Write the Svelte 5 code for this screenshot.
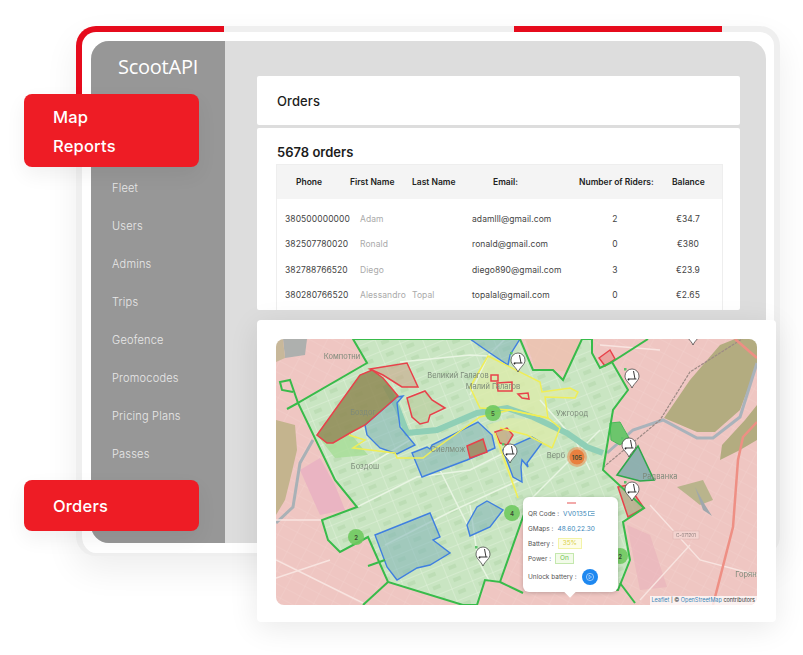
<script>
  const nav = ['Fleet', 'Users', 'Admins', 'Trips', 'Geofence', 'Promocodes', 'Pricing Plans', 'Passes'];
  const heads = ['Phone', 'First Name', 'Last Name', 'Email:', 'Number of Riders:', 'Balance'];
  const rows = [
    { phone: '380500000000', first: 'Adam', last: '', email: 'adamlll@gmail.com', riders: 2, bal: '€34.7' },
    { phone: '382507780020', first: 'Ronald', last: '', email: 'ronald@gmail.com', riders: 0, bal: '€380' },
    { phone: '382788766520', first: 'Diego', last: '', email: 'diego890@gmail.com', riders: 3, bal: '€23.9' },
    { phone: '380280766520', first: 'Alessandro', last: 'Topal', email: 'topalal@gmail.com', riders: 0, bal: '€2.65' },
  ];

  // map shapes, in page pixels (viewBox starts at the map's corner)
  const zone = '353,339 367,363 298,403 335,480 357,507 322,520 328,540 340,552 368,537 388,582 463,605 477,605 485,580 500,582 523,517 560,585 618,590 630,560 623,522 644,508 603,470 613,410 628,390 612,362 600,368 592,353 592,339 582,339 563,380 553,370 533,370 520,339';
  const yellowNorth = '488,356 540,382 542,392 570,388 578,392 575,398 545,397 548,418 510,410 480,408 470,387';
  const yellowSouth = '487,425 510,418 548,420 560,428 552,448 527,435 505,432 512,465 518,498 502,460 495,440';
  const blue = [
    '470,339 490,353 508,365 510,355 520,339',
    '365,425 397,397 403,396 397,403 400,427 415,445 397,454 380,448 367,435',
    '412,453 427,447 430,449 432,445 478,422 492,435 495,448 467,460 422,477',
    '467,525 477,507 487,501 503,510 490,527 470,536',
    '375,535 430,513 440,537 433,540 450,553 430,565 417,568 397,580 387,567',
    '503,450 532,437 542,443 527,463 528,467 522,460 521,467 522,482 513,477',
  ];
  const red = [
    { p: '317,435 360,375 372,370 383,378 398,396 365,425 350,433 333,443 327,443', f: '#8f8a55', o: 0.85 },
    { p: '370,369 407,363 418,387 402,387 383,375', f: '#c9a78a', o: 0.6 },
    { p: '407,398 425,391 432,400 445,408 430,415 428,422 420,424 412,417', f: '#b9c99a', o: 0.6 },
    { p: '467,446 483,439 487,452 470,458', f: '#a08a60', o: 0.85 },
    { p: '491,375 498,375 498,381 491,381', f: 'none', o: 0 },
    { p: '497,383 512,382 512,391 498,391', f: 'none', o: 0 },
    { p: '518,394 528,393 529,399 522,398', f: 'none', o: 0 },
    { p: '495,432 507,428 513,435 507,445 500,443', f: '#c0a080', o: 0.7 },
    { p: '599,358 610,350 615,359 605,366', f: '#e89a96', o: 0.8 },
    { p: '618,487 628,485 644,508 628,517', f: '#b8a888', o: 0.8 },
  ];
  const pins = [[518, 372], [510, 463], [483, 566], [632, 388], [629, 457], [632, 501], [693, 345]];
  const clusters = [
    { x: 493, y: 413, n: '5' },
    { x: 356, y: 537, n: '2' },
    { x: 512, y: 513, n: '4' },
    { x: 620, y: 556, n: '2' },
  ];
  const labels = [
    { x: 342, y: 359, t: 'Компотни' },
    { x: 458, y: 378, t: 'Великий Галагов' },
    { x: 493, y: 389, t: 'Малий Галагов' },
    { x: 363, y: 415, t: 'Боздог' },
    { x: 448, y: 452, t: 'Сиелмож' },
    { x: 365, y: 469, t: 'Боздош' },
    { x: 572, y: 416, t: 'Ужгород' },
    { x: 556, y: 458, t: 'Верб' },
    { x: 660, y: 479, t: 'Радванка' },
    { x: 746, y: 577, t: 'Горян' },
  ];
  // lighter main streets laid over the zone
  const streets = [
    '357,507 417,477 470,470 510,450',
    '385,545 450,512 520,480',
    '470,505 478,560 490,582',
    '400,362 470,355 488,356',
    '505,339 488,356 470,395',
    '540,400 575,440 590,470',
    '560,470 600,430',
    '530,500 560,470',
    '360,470 410,440',
    '440,470 470,530',
  ];
  const pinkRoads = [
    '276,560 363,603',
    '276,520 322,520',
    '276,578 330,560',
    '650,505 700,560 757,575',
    '640,600 690,545',
    '660,350 600,345',
  ];
</script>

<div class="stage">
  <div class="frame">
    <div class="screen">
      <aside class="side">
        <div class="logo">ScootAPI</div>
        <nav class="nav">
          {#each nav as item}
            <span>{item}</span>
          {/each}
        </nav>
      </aside>
      <main class="main">
        <div class="card title-card">Orders</div>
        <div class="card list-card">
          <h2>5678 orders</h2>
          <div class="table">
            <div class="thead">
              {#each heads as h}
                <span>{h}</span>
              {/each}
            </div>
            <div class="tbody">
              {#each rows as r}
                <div class="row">
                  <span>{r.phone}</span>
                  <span class="muted">{r.first}</span>
                  <span class="muted">{r.last}</span>
                  <span>{r.email}</span>
                  <span class="mid">{r.riders}</span>
                  <span class="mid">{r.bal}</span>
                </div>
              {/each}
            </div>
          </div>
        </div>
      </main>
    </div>
    <div class="accent-left"></div>
    <div class="accent-right"></div>
  </div>

  <div class="tag tag-top"><span>Map</span><span>Reports</span></div>
  <div class="tag tag-bottom"><span>Orders</span></div>

  <div class="map-card">
    <div class="map">
      <svg class="tiles" viewBox="276 339 481 266" width="481" height="266">
        <defs>
          <pattern id="pinkGrid" width="16" height="11" patternUnits="userSpaceOnUse" patternTransform="rotate(28)">
            <path d="M0 0H16M0 0V11" stroke="#f6dcd8" stroke-width="0.8" fill="none" opacity="0.55" />
          </pattern>
          <pattern id="greenGrid" width="22" height="13" patternUnits="userSpaceOnUse" patternTransform="rotate(-22)">
            <path d="M0 0H22M0 0V13" stroke="#e2f2dc" stroke-width="1" fill="none" />
            <rect x="5" y="4" width="8" height="4" fill="#a9d3a2" opacity="0.4" />
          </pattern>
        </defs>

        <rect x="276" y="339" width="481" height="266" fill="#efc6c2" />
        <rect x="276" y="339" width="481" height="266" fill="url(#pinkGrid)" />

        <!-- land use outside the zone -->
        <polygon points="283,339 307,339 305,355 285,358" fill="#aeb0ae" />
        <polygon points="276,339 283,339 285,358 276,362" fill="#c8b89a" />
        <polygon points="276,420 295,425 297,450 290,480 285,500 276,515" fill="#c4b48e" />
        <polygon points="300,470 320,458 335,485 345,510 320,515" fill="#eab4c2" />
        <polygon points="664,418 690,380 720,345 735,339 757,339 757,365 740,410 715,432 697,432" fill="#b3ac80" />
        <polygon points="720,460 722,445 745,420 757,405 757,440 740,450" fill="#b3ac80" />
        <polygon points="677,487 703,480 713,500 700,505 690,497" fill="#b9b48c" />
        <polygon points="695,487 705,505 712,516 703,510" fill="#9fa7ad" />
        <polygon points="525,339 580,339 570,372 535,368" fill="#e9c3ac" opacity="0.7" />
        <polygon points="627,525 650,535 667,587 640,590" fill="#e8aeba" opacity="0.5" />
        <polyline points="313,440 300,463 293,507 276,523" fill="none" stroke="#a9b1b6" stroke-width="3" />
        <polyline points="607,453 633,430 663,420 697,438 713,438 740,417 757,363" fill="none" stroke="#a9b3bb" stroke-width="3" />
        <polyline points="600,470 660,420 690,372 742,339" fill="none" stroke="#9d8a85" stroke-width="1.2" stroke-dasharray="3 1" />
        {#each pinkRoads as r}
          <polyline points={r} fill="none" stroke="#f8e4e0" stroke-width="1.4" />
        {/each}
        <polyline points="757,422 743,437 738,460 733,527 713,605" fill="none" stroke="#ee8f84" stroke-width="2.5" />
        <polyline points="735,339 757,358" fill="none" stroke="#ee8f84" stroke-width="2.5" />
        <rect x="673" y="531" width="26" height="8" fill="#f3d3cf" stroke="#d9b0ac" stroke-width="0.5" />
        <text x="686" y="537" class="road">C-071201</text>

        <!-- service zone -->
        <polygon points={zone} fill="#c9e5c2" />
        <polygon points={zone} fill="url(#greenGrid)" />
        <polygon points={yellowNorth} fill="#dcebaa" opacity="0.8" />
        <polygon points={yellowSouth} fill="#dcebaa" opacity="0.8" />
        <polygon points="317,435 327,443 333,443 350,433 368,455 335,458" fill="#a6dd96" opacity="0.8" />
        {#each streets as s}
          <polyline points={s} fill="none" stroke="#e8f5e2" stroke-width="1.5" />
        {/each}
        <polyline points="385,385 397,407 407,433 437,430 477,413 507,408 533,417 567,433 587,447 603,453" fill="none" stroke="#8fcfb6" stroke-width="6" />
        <polygon points="610,423 620,422 629,438 620,445 611,440" fill="#6cc56c" stroke="#4cb85a" />

        {#each blue as p}
          <polygon points={p} fill="#7fb2b8" fill-opacity="0.55" stroke="#3f7fe0" stroke-width="1.4" />
        {/each}
        {#each red as r}
          <polygon points={r.p} fill={r.f} fill-opacity={r.o} stroke="#e8414a" stroke-width="1.5" />
        {/each}

        <!-- yellow ribbons -->
        <g fill="none" stroke="#f0ee55" stroke-width="1.5">
          <polyline points="349,435 365,440 353,448 395,453 397,458 423,458 432,451 480,417 510,410 548,418 560,428 552,448" />
          <polygon points={yellowNorth} />
          <polyline points="500,428 527,435 552,448" />
          <polyline points="495,433 518,498" />
        </g>

        <!-- zone outline -->
        <g fill="none" stroke="#38bb4a" stroke-width="2">
          <polygon points={zone} />
          <polyline points="287,409 298,403 290,380 280,382 282,390 293,392" />
          <polyline points="363,605 388,582" />
          <polyline points="368,566 385,560" />
          <polyline points="500,582 523,593" />
          <polyline points="612,362 648,339" />
          <polyline points="620,583 635,603" />
        </g>
        <polygon points="638,446 654,480 640,481 617,475" fill="#6fa8a8" fill-opacity="0.75" stroke="#2fa84a" stroke-width="1.6" />

        {#each labels as l}
          <text x={l.x} y={l.y} class="place">{l.t}</text>
        {/each}
      </svg>

      <svg class="marks" viewBox="276 339 481 266" width="481" height="266">
        <defs>
          <symbol id="pin" viewBox="-8 -21 16 22" overflow="visible">
            <path d="M0 0C-2-5-7-7-7-12A7 7 0 1 1 7-12C7-7 2-5 0 0Z" fill="#fff" stroke="#333" stroke-width="0.7" />
            <path d="M1.5-17 3-9H-3.5M3-9 4.5-9" fill="none" stroke="#222" stroke-width="0.9" />
            <circle cx="-3.5" cy="-8.5" r="0.9" fill="#222" />
            <rect x="-8" y="-20" width="2.5" height="2.5" fill="#5cc26a" />
          </symbol>
        </defs>
        {#each clusters as c}
          <circle cx={c.x} cy={c.y} r="8" fill="#6fc95f" opacity="0.9" />
          <text x={c.x} y={c.y + 2.5} class="count">{c.n}</text>
        {/each}
        <circle cx="577" cy="457" r="10" fill="#ec8a4e" opacity="0.55" />
        <circle cx="577" cy="457" r="7.5" fill="#e9803f" />
        <text x="577" y="459.5" class="count">105</text>

        {#each pins as p}
          <use href="#pin" x={p[0] - 8} y={p[1] - 21} width="16" height="22" />
        {/each}
      </svg>

      <div class="popup">
        <i class="dash"></i>
        <div class="pop-row"><span>QR Code :</span><b class="link">VV0135</b><svg class="qr" viewBox="0 0 7 5" width="7" height="5"><path d="M0.4 0.4H6.6M0.4 4.6H6.6M0.4 0.4V4.6M3 2.5H6.6" fill="none" stroke="#3a86b8" stroke-width="0.7" /></svg></div>
        <div class="pop-row"><span>GMaps :</span><b class="link">48.60,22.30</b></div>
        <div class="pop-row"><span>Battery :</span><b class="chip chip-y">35%</b></div>
        <div class="pop-row"><span>Power :</span><b class="chip chip-g">On</b></div>
        <div class="pop-row last">
          <span>Unlock battery :</span>
          <span class="unlock">
            <svg viewBox="0 0 16 16" width="16" height="16">
              <circle cx="8" cy="8" r="3.6" fill="none" stroke="#cfe4ff" stroke-width="0.7" />
              <path d="M7 6.2 9.6 8 7 9.8Z" fill="none" stroke="#cfe4ff" stroke-width="0.6" />
            </svg>
          </span>
        </div>
      </div>

      <div class="attrib"><em>Leaflet</em> | © <em>OpenStreetMap</em> contributors</div>
    </div>
  </div>
</div>

<style>
  :global(body) {
    margin: 0;
    background: #fff;
    font-family: Inter, "Liberation Sans", sans-serif;
  }

  .stage {
    position: relative;
    width: 803px;
    height: 655px;
    padding: 26px 23px 0 76px;
    box-sizing: border-box;
    overflow: hidden;
  }

  .frame {
    position: relative;
    height: 530px;
    box-sizing: border-box;
    padding: 9px 8px 9px 9px;
    border: 6px solid #efefef;
    border-bottom-width: 3px;
    border-radius: 20px;
    background: #fff;
    box-shadow: 0 14px 34px rgba(0, 0, 0, 0.07);
  }

  .accent-left {
    position: absolute;
    left: -6px;
    top: -6px;
    width: 148px;
    height: 68px;
    box-sizing: border-box;
    border-top: 6px solid #e60b1c;
    border-left: 6px solid #e60b1c;
    border-top-left-radius: 20px;
  }
  .accent-right {
    position: absolute;
    left: 432px;
    top: -6px;
    width: 208px;
    height: 6px;
    background: #e60b1c;
  }

  .screen {
    display: flex;
    height: 502px;
    border-radius: 18px 18px 0 18px;
    overflow: hidden;
    background: #ddd;
  }

  .side {
    flex: 0 0 134px;
    background: #979797;
    color: #e8e8e8;
  }
  .logo {
    margin: 14px 0 0 27px;
    font-family: "Open Sans", sans-serif;
    font-size: 20px;
    line-height: 24px;
    letter-spacing: -0.25px;
    color: #fff;
  }
  .nav {
    display: flex;
    flex-direction: column;
    gap: 24px;
    margin: 102px 0 0 21px;
    font-size: 11px;
    font-weight: 300;
    letter-spacing: 0.2px;
    line-height: 14px;
  }

  .main {
    flex: 1;
    display: flex;
    flex-direction: column;
    gap: 3px;
    padding: 35px 26px 0 32px;
  }
  .card {
    background: #fff;
    border-radius: 2px;
    box-sizing: border-box;
    padding-left: 20px;
  }
  .title-card {
    height: 49px;
    line-height: 50px;
    font-size: 13px;
    font-weight: 500;
    letter-spacing: 0.1px;
    color: #1c1c1c;
  }
  .list-card {
    height: 182px;
    padding-right: 17px;
    overflow: hidden;
  }
  .list-card h2 {
    margin: 16px 0 4px;
    font-size: 13px;
    line-height: 16px;
    font-weight: 600;
    color: #1c1c1c;
  }

  .table {
    margin-left: -1px;
    border: 1px solid #eee;
    height: 160px;
  }
  .thead {
    display: grid;
    grid-template-columns: 54px 62px 81px 86px 93px 1fr;
    height: 34px;
    align-items: center;
    padding-left: 19px;
    background: #f4f4f4;
    font-size: 8.5px;
    font-weight: 600;
    color: #222;
    white-space: nowrap;
  }
  .tbody {
    padding: 7px 0 0 8px;
  }
  .row {
    display: grid;
    grid-template-columns: 75px 52px 60px 98px 90px 56px;
    height: 25.5px;
    align-items: center;
    font-size: 8.5px;
    letter-spacing: 0.08px;
    color: #444;
    white-space: nowrap;
  }
  .muted {
    color: #aaa;
  }
  .mid {
    text-align: center;
  }

  .tag {
    position: absolute;
    left: 24px;
    width: 175px;
    box-sizing: border-box;
    padding-left: 29px;
    display: flex;
    flex-direction: column;
    justify-content: center;
    background: #ee1c25;
    border-radius: 8px;
    color: #fff;
    font-size: 16.5px;
    font-weight: 500;
    letter-spacing: 0.2px;
    box-shadow: 0 8px 20px rgba(0, 0, 0, 0.06);
  }
  .tag-top {
    top: 94px;
    height: 73px;
    gap: 11px;
    line-height: 18px;
    padding-top: 2px;
  }
  .tag-bottom {
    top: 480px;
    height: 51px;
    line-height: 18px;
  }

  .map-card {
    position: absolute;
    left: 257px;
    top: 320px;
    width: 519px;
    height: 302px;
    box-sizing: border-box;
    padding: 19px;
    background: #fff;
    border-radius: 4px;
    box-shadow: 0 6px 30px rgba(0, 0, 0, 0.09);
  }
  .map {
    position: relative;
    width: 481px;
    height: 266px;
    border-radius: 8px;
    overflow: hidden;
  }
  .tiles {
    display: block;
    filter: blur(0.4px);
  }
  .marks {
    position: absolute;
    left: 0;
    top: 0;
  }
  .place {
    font-size: 7.5px;
    fill: #7d8a7a;
    text-anchor: middle;
  }
  .count {
    font-size: 6px;
    fill: #3c4a33;
    text-anchor: middle;
    font-weight: 600;
  }
  .road {
    font-size: 4.5px;
    fill: #8a7a78;
    text-anchor: middle;
  }

  .popup {
    position: absolute;
    left: 247px;
    top: 158px;
    width: 95px;
    height: 95px;
    box-sizing: border-box;
    padding: 9px 0 0 5px;
    background: #fff;
    border-radius: 6px;
    box-shadow: 0 1px 4px rgba(0, 0, 0, 0.2);
    font-size: 6.5px;
    color: #555;
  }
  .popup::after {
    content: '';
    position: absolute;
    left: 43px;
    bottom: -4px;
    width: 8px;
    height: 8px;
    background: #fff;
    transform: rotate(45deg);
  }
  .dash {
    position: absolute;
    left: 44px;
    top: 5px;
    width: 9px;
    height: 1.5px;
    background: #f2a9a9;
  }
  .pop-row {
    display: flex;
    align-items: center;
    gap: 4px;
    height: 15px;
  }
  .pop-row.last {
    height: 20px;
    margin-top: 1px;
  }
  .link {
    font-weight: 400;
    color: #3a86b8;
  }
  .qr {
    margin-left: -3px;
  }
  .chip {
    font-weight: 400;
    padding: 0 4px;
    line-height: 9px;
    border: 1px solid;
  }
  .chip-y {
    color: #d9cf4a;
    background: #fdfde8;
    border-color: #f3f3a8;
  }
  .chip-g {
    color: #71c255;
    background: #f2fbe9;
    border-color: #c4e8ae;
  }
  .unlock {
    display: flex;
    width: 16px;
    height: 16px;
    margin-left: 1px;
    border-radius: 50%;
    background: #1e88f0;
  }

  .attrib {
    position: absolute;
    right: 0;
    bottom: 0;
    padding: 1px 2px;
    background: rgba(255, 255, 255, 0.75);
    font-size: 5.5px;
    line-height: 7px;
    color: #333;
  }
  .attrib em {
    font-style: normal;
    color: #3a86b8;
  }
</style>
